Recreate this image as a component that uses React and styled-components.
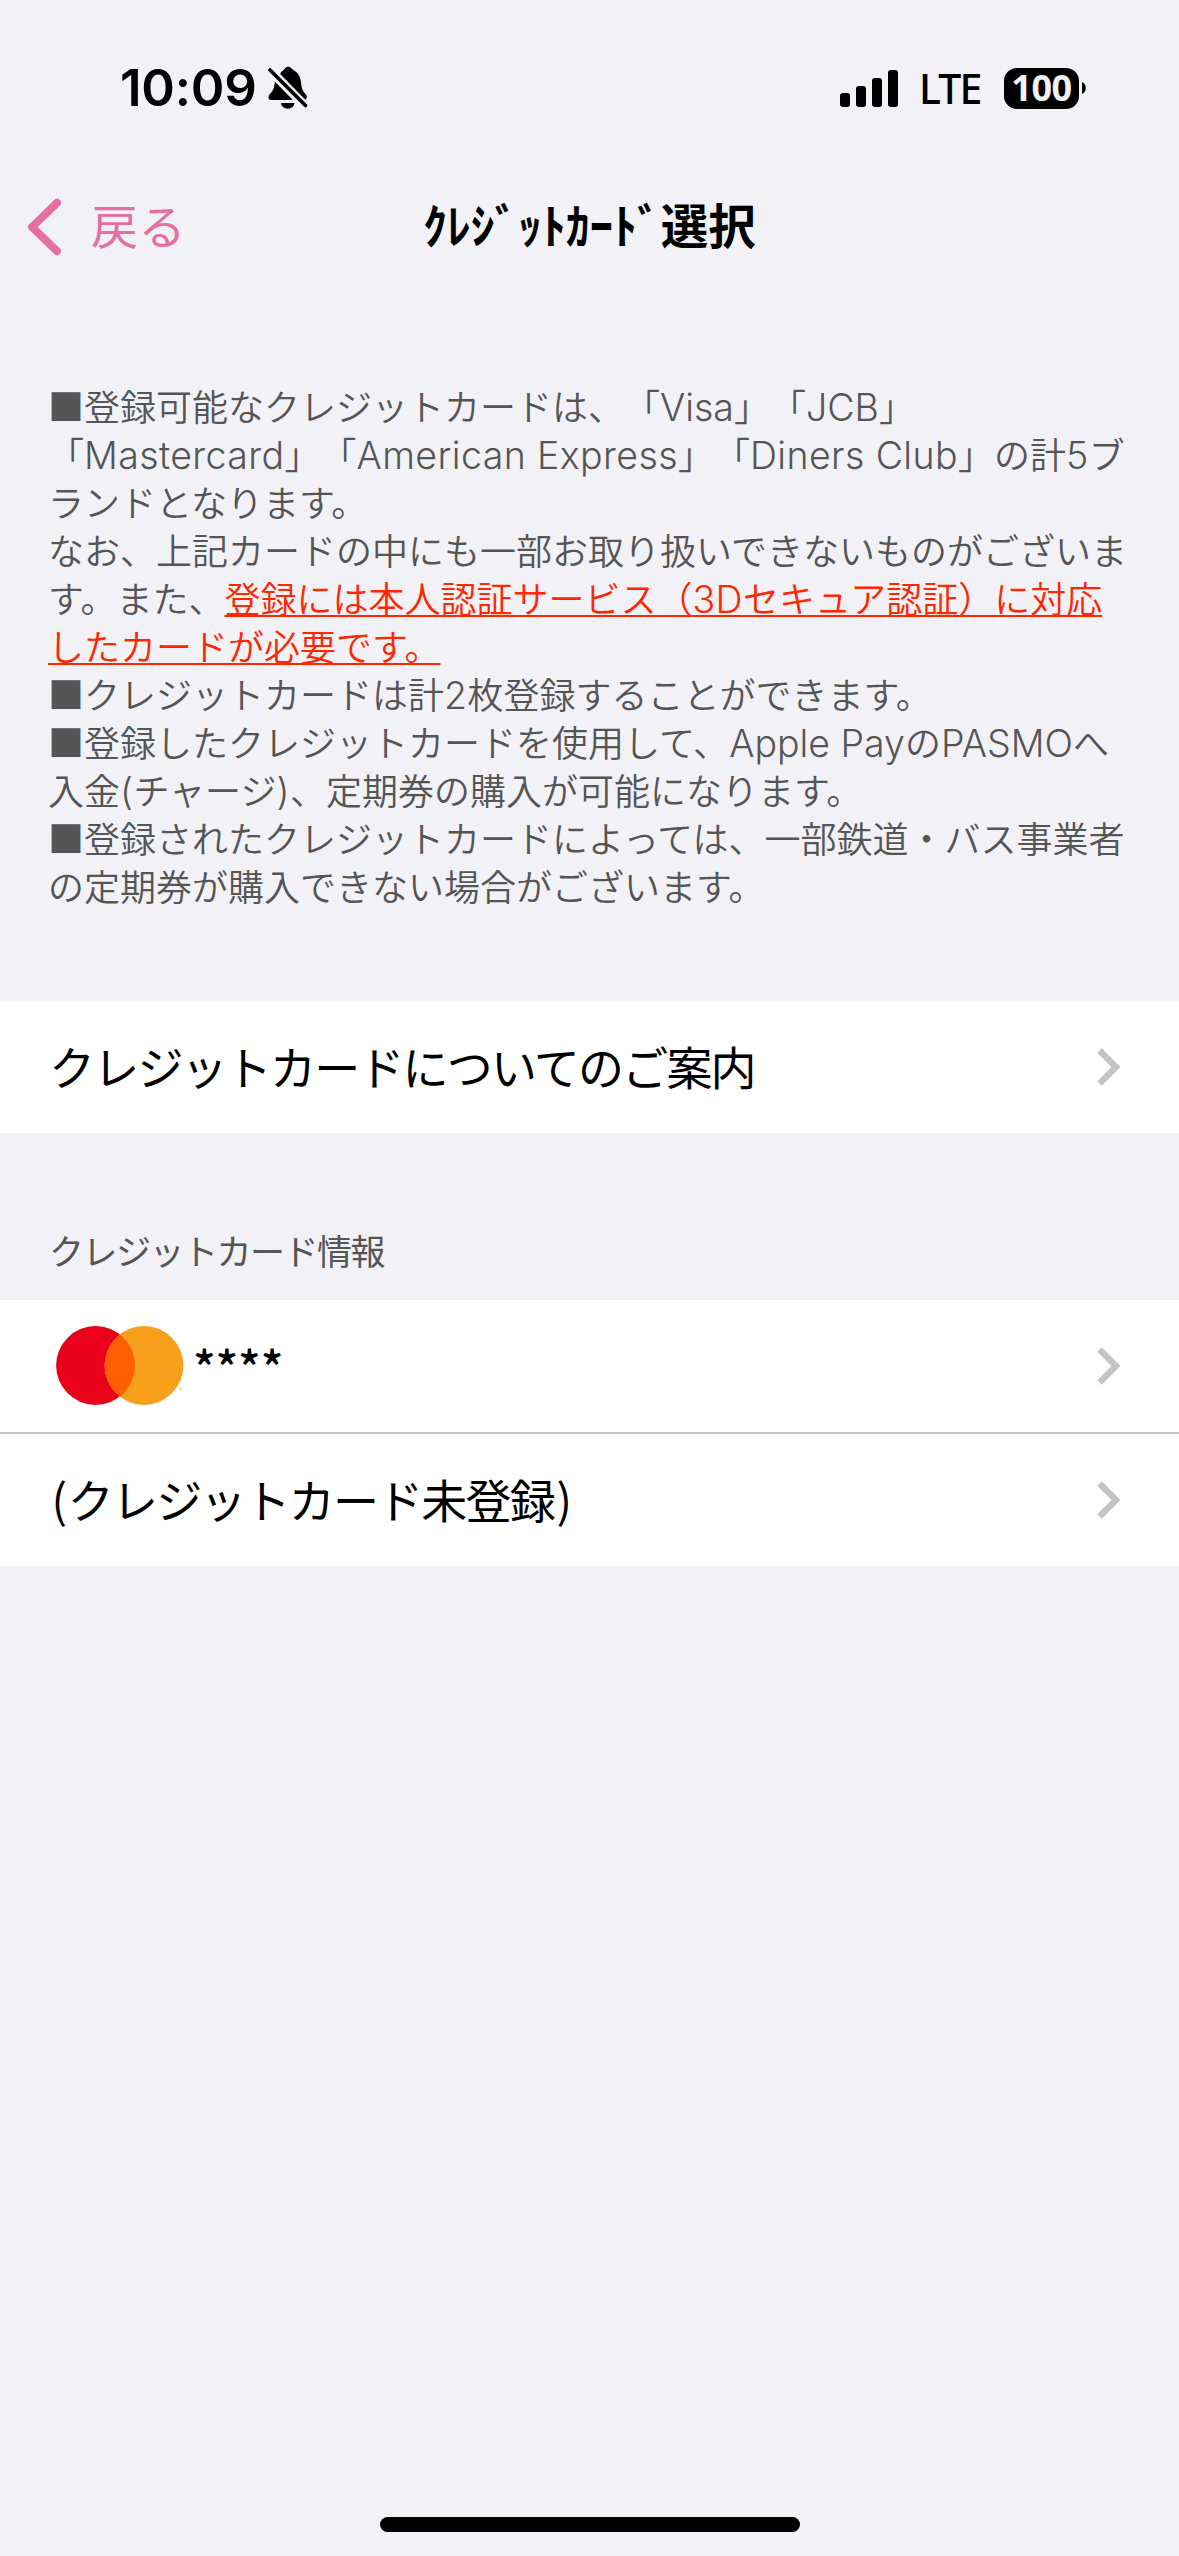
import React from 'react';
import styled, { createGlobalStyle } from 'styled-components';

const noticeLines = [
  [{ text: '■登録可能なクレジットカードは、「' }, { latin: 'Visa', tight: true }, { text: '」「' }, { latin: 'JCB', tight: true }, { text: '」' }],
  [
    { text: '「' },
    { latin: 'Mastercard' },
    { text: '」「' },
    { latin: 'American Express' },
    { text: '」「' },
    { latin: 'Diners Club' },
    { text: '」の計' },
    { latin: '5' },
    { text: 'ブ' },
  ],
  [{ text: 'ランドとなります。' }],
  [{ text: 'なお、上記カードの中にも一部お取り扱いできないものがございま' }],
  [
    { text: 'す。また、' },
    { text: '登録には本人認証サービス（', alert: true },
    { latin: '3D', alert: true },
    { text: 'セキュア認証）に対応', alert: true },
  ],
  [{ text: 'したカードが必要です。', alert: true }],
  [{ text: '■クレジットカードは計' }, { latin: '2' }, { text: '枚登録することができます。' }],
  [
    { text: '■登録したクレジットカードを使用して、' },
    { latin: 'Apple Pay', tight: true },
    { text: 'の' },
    { latin: 'PASMO', tight: true },
    { text: 'へ' },
  ],
  [{ text: '入金' }, { latin: '(' }, { text: 'チャージ' }, { latin: ')' }, { text: '、定期券の購入が可能になります。' }],
  [{ text: '■登録されたクレジットカードによっては、一部鉄道・バス事業者' }],
  [{ text: 'の定期券が購入できない場合がございます。' }],
];

const Chevron = () => (
  <svg width="24" height="40" viewBox="0 0 24 40" fill="none">
    <path d="M2.5 3.5 L19 20 L2.5 36.5" stroke="#c4c4c4" strokeWidth="6.4" />
  </svg>
);

const MutedBell = () => (
  <svg width="40" height="44" viewBox="0 0 40 44">
    <path
      d="M12 8 C13.5 5 16 4 17 2.5 C18.5 .3 22 .3 23.5 2.5 C25 4.5 32 6 33 16 C33.5 22 34 24 38 28.5 C39.5 30.5 39 34 36 34 H3 C0 34 0 30 1.5 28.5 C6 24 6.5 21 7 14 C7.5 11.5 9 9 12 8 Z"
      fill="#000"
    />
    <path d="M13 37 H26.5 C25.5 44.5 14 44.5 13 37 Z" fill="#000" />
    <path d="M0 2 L38 41" stroke="#f2f1f6" strokeWidth="9" />
    <path d="M2 4 L37.5 39.5" stroke="#000" strokeWidth="3.6" strokeLinecap="round" />
  </svg>
);

const MastercardLogo = () => (
  <svg width="128" height="80" viewBox="0 0 128 80">
    <circle cx="39.5" cy="39.5" r="39.4" fill="#eb001b" />
    <circle cx="88" cy="39.5" r="39.4" fill="#f79e1b" />
    <path d="M63.75 8.45 A39.4 39.4 0 0 1 63.75 70.55 A39.4 39.4 0 0 1 63.75 8.45 Z" fill="#ff5f00" />
    <rect x="123.5" y="62" width="3" height="1.5" fill="#fbc881" />
  </svg>
);

const App = () => {
  return (
    <>
      <GlobalStyle />
      <Screen>
        <StatusBar>
          <Clock>10:09</Clock>
          <MutedBell />
          <StatusRight>
            <svg width="58" height="37" viewBox="0 0 58 37">
              <rect x="0" y="23" width="10" height="14" rx="3" />
              <rect x="16" y="16" width="10" height="21" rx="3" />
              <rect x="32" y="8" width="10" height="29" rx="3" />
              <rect x="48" y="0" width="10" height="37" rx="3" />
            </svg>
            <Network>LTE</Network>
            <Battery>100</Battery>
            <svg width="4" height="12" viewBox="0 0 4 12">
              <path d="M0 0 C5 2 5 10 0 12 Z" />
            </svg>
          </StatusRight>
        </StatusBar>

        <NavBar>
          <BackButton>
            <svg width="34" height="58" viewBox="0 0 34 58" fill="none">
              <path d="M30 4.8 L5 29 L30 53.2" stroke="#e66fa1" strokeWidth="8" strokeLinecap="round" strokeLinejoin="round" />
            </svg>
            <BackLabel>戻る</BackLabel>
          </BackButton>
          <Title>ｸﾚｼﾞｯﾄｶｰﾄﾞ選択</Title>
        </NavBar>

        <Notice>
          {noticeLines.map((line, i) => (
            <Line key={i}>
              {line.map((part, j) => {
                const content = part.latin ? <Latin $tight={part.tight}>{part.latin}</Latin> : part.text;
                return part.alert ? <Alert key={j}>{content}</Alert> : <span key={j}>{content}</span>;
              })}
            </Line>
          ))}
        </Notice>

        <List>
          <Row>
            <RowText>クレジットカードについてのご案内</RowText>
            <Chevron />
          </Row>
        </List>

        <SectionTitle>クレジットカード情報</SectionTitle>
        <List>
          <Row $card>
            <MastercardLogo />
            <CardNumber>****</CardNumber>
            <Chevron />
          </Row>
          <Row>
            <RowText>
              <Paren>(</Paren>クレジットカード未登録<Paren>)</Paren>
            </RowText>
            <Chevron />
          </Row>
        </List>

        <HomeIndicator />
      </Screen>
    </>
  );
};

const GlobalStyle = createGlobalStyle`
  * {
    box-sizing: border-box;
  }
  body {
    margin: 0;
    background: #f2f1f6;
    font-family: "Noto Sans CJK JP", sans-serif;
    text-spacing-trim: space-all;
    color: #000;
  }
  svg {
    display: block;
    flex-shrink: 0;
  }
`;

const Screen = styled.main`
  width: 1179px;
  height: 2556px;
  display: flex;
  flex-direction: column;
  background: #f2f1f6;
  overflow: hidden;
`;

const StatusBar = styled.header`
  height: 176px;
  padding: 0 93px 0 120px;
  display: flex;
  align-items: center;
`;

const Clock = styled.span`
  width: 148px;
  font: 600 51px/60px Inter, sans-serif;
  letter-spacing: -0.2px;
`;

const StatusRight = styled.div`
  margin-left: auto;
  display: flex;
  align-items: center;
`;

const Network = styled.span`
  width: 85px;
  margin-left: 21px;
  font: 500 41px/46px "Noto Sans", sans-serif;
  letter-spacing: -1.8px;
`;

const Battery = styled.span`
  width: 75px;
  height: 41px;
  margin-right: 3px;
  border-radius: 13px;
  background: #000;
  color: #f2f1f6;
  font: 700 36px/40px "Noto Sans", sans-serif;
  letter-spacing: -0.5px;
  text-align: center;
`;

const NavBar = styled.nav`
  height: 102px;
  display: grid;
  grid-template-columns: 1fr auto 1fr;
  align-items: center;
`;

const BackButton = styled.div`
  padding-left: 27px;
  display: flex;
  align-items: center;
  gap: 30px;
  color: #e66fa1;
`;

const BackLabel = styled.span`
  padding-bottom: 6px;
  font-size: 47px;
  line-height: 60px;
  letter-spacing: 0.5px;
`;

const Title = styled.h1`
  margin: 0;
  padding-bottom: 6px;
  font-size: 47.5px;
  font-weight: 700;
  line-height: 60px;
`;

const Notice = styled.section`
  height: 723px;
  padding: 103px 0 0 48px;
  color: #555;
  font-size: 36px;
  font-weight: 350;
`;

const Line = styled.p`
  height: 48px;
  margin: 0;
  line-height: 48px;
  white-space: nowrap;
`;

const Latin = styled.span`
  font-family: Inter, sans-serif;
  font-size: 37.5px;
  font-weight: 350;
  letter-spacing: ${({ $tight }) => ($tight ? '0' : '0.4px')};
`;

const Alert = styled.span`
  color: #ff2600;
  text-decoration: underline;
  text-decoration-thickness: 2px;
  text-underline-offset: 2px;
`;

const List = styled.ul`
  margin: 0;
  padding: 0;
  background: #fff;
`;

const Row = styled.li`
  height: 132px;
  padding: 0 58px 0 ${({ $card }) => ($card ? '56px' : '49px')};
  display: flex;
  align-items: center;
  justify-content: space-between;

  & + & {
    height: 134px;
    border-top: 2px solid #c4c4c4;
  }
`;

const RowText = styled.span`
  padding-bottom: 5px;
  font-size: 46px;
  line-height: 60px;
  letter-spacing: -1.8px;
`;

const Paren = styled.span`
  margin: 0 2.5px;
`;

const CardNumber = styled.span`
  margin: 0 auto 0 9px;
  font-size: 47px;
  font-weight: 500;
  line-height: 60px;
  letter-spacing: -0.2px;
`;

const SectionTitle = styled.h2`
  height: 167px;
  margin: 0;
  padding: 93px 0 0 49px;
  color: #555;
  font-size: 35px;
  font-weight: 400;
  line-height: 48px;
  letter-spacing: -1.5px;
`;

const HomeIndicator = styled.div`
  width: 420px;
  height: 15px;
  margin: auto auto 24px;
  border-radius: 8px;
  background: #000;
`;

export default App;
